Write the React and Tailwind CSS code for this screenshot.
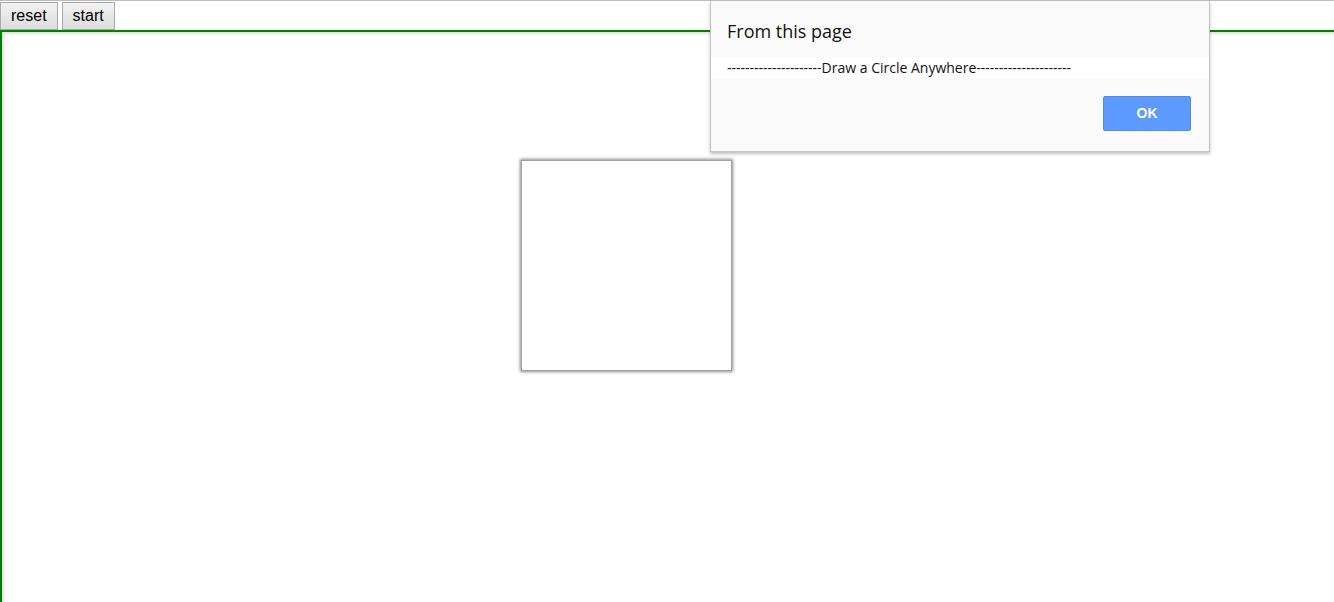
import React from 'react';

const dashes = '---------------------';

const AlertBox = () => (
    <div className="absolute left-[710px] top-0 w-[500px] h-[151px] bg-[#fafafa] border-x border-b border-[#c4c4c4] shadow-[0_2px_3px_rgba(0,0,0,0.25)] font-['Open_Sans',sans-serif] text-[#111]">
        {/* title */}
        <div className="pl-[16px] pt-[18px] text-[18px] leading-[24px]">From this page</div>
        {/* message */}
        <div className="mt-[14px] h-[21px] bg-white pl-[16px] text-[14px] leading-[21px] whitespace-nowrap">
            {dashes}Draw a Circle Anywhere{dashes}
        </div>
        <div className="flex justify-end pr-[18px] mt-[18px]">
            <button className="w-[88px] h-[35px] rounded-[2px] bg-[#5c9aff] border border-[#4f8be8] text-white font-bold text-[14px] font-['Liberation_Sans',sans-serif]">
                OK
            </button>
        </div>
    </div>
);

export default function App() {
    return (
        <div className="relative w-full h-[602px] overflow-hidden bg-white border-t border-[#bcbcbc] font-['Liberation_Sans',Arial,sans-serif]">
            {/* toolbar */}
            <div className="flex gap-[4px] pt-[1px] h-[29px]">
                <button className="h-[28px] px-[10px] border border-[#a9a9a9] bg-gradient-to-b from-[#f2f2f2] to-[#dddddd] text-[16px] leading-none text-black">
                    reset
                </button>
                <button className="h-[28px] px-[10px] border border-[#a9a9a9] bg-gradient-to-b from-[#f2f2f2] to-[#dddddd] text-[16px] leading-none text-black">
                    start
                </button>
            </div>

            {/* drawing area */}
            <div className="w-[1500px] h-[700px] border-t-2 border-l-2 border-[#008000] shadow-[inset_2px_2px_3px_rgba(0,0,0,0.12)] pt-[128px] pl-[519px]">
                <div className="w-[211px] h-[211px] bg-white border border-[#a0a0a0] shadow-[0_0_3px_1px_rgba(0,0,0,0.45)]" />
            </div>

            <AlertBox />
        </div>
    );
}
